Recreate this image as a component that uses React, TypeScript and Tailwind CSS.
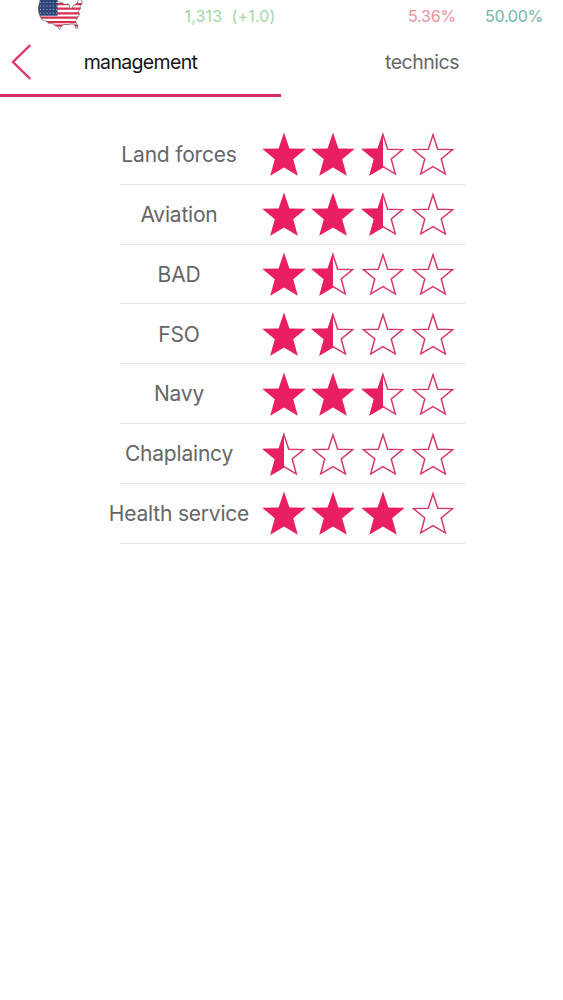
import React from 'react';

const ratings = [
  { label: 'Land forces', stars: 2.5 },
  { label: 'Aviation', stars: 2.5 },
  { label: 'BAD', stars: 1.5 },
  { label: 'FSO', stars: 1.5 },
  { label: 'Navy', stars: 2.5 },
  { label: 'Chaplaincy', stars: 0.5 },
  { label: 'Health service', stars: 3 },
];

function Star({ fill }: { fill: number }) {
  return (
    <svg viewBox="0 0 44 44" className="h-[44px] w-[44px] shrink-0">
      {fill === 1 ? (
        <path d="M22 0.4L27.4 16.6L43.8 16.8L31.2 27.2L35.8 43.7L22 35.6L8.2 43.7L12.8 27.2L0.2 16.8L16.6 16.6Z" fill="#e91e63" />
      ) : (
        <path
          d="M22 2.8L26.7 17.3L41.6 17.6L30.2 27L34.3 41.8L22 34.6L9.7 41.8L13.8 27L2.4 17.6L17.3 17.3Z"
          fill="none"
          stroke="#d63a72"
          strokeWidth="1.5"
        />
      )}
      {fill === 0.5 && <path d="M22 0.4V35.6L8.2 43.7L12.8 27.2L0.2 16.8L16.6 16.6Z" fill="#e91e63" />}
    </svg>
  );
}

const USA =
  'M2.5 -2L3 1L1.5 7L1.5 11L3 16L5 20L9 21L12 23.5L15 23L18 25.5L20.5 26.5L22.5 29.5L24 26.5L27 24.5L31 24.5L34 24L37 24L39 28.5L41 28L40.5 25L38.5 21.5L40.5 18L42.5 14L41.5 11.5L43.5 8.5L43 6L45.5 3L44 0L44 -2L41.5 -2L40.5 3L36.5 5.5L35 8L32 9L33 5.5L31 4L28 4.5L25 3L22 2L20 0V-2Z';

// Country outline filled with its flag
function FlagMap() {
  return (
    <svg viewBox="0 0 47 31" className="h-[31px] w-[47px]">
      <defs>
        <clipPath id="usa">
          <path d={USA} />
        </clipPath>
      </defs>
      <g clipPath="url(#usa)">
        <path fill="#fff" d="M0 0H47V31H0Z" />
        <path fill="#d8304f" d="M0 3H47V5.2H0ZM0 7.6H47V9.8H0ZM0 12.2H47V14.4H0ZM0 16.6H47V18.8H0ZM0 21H47V23.2H0ZM0 24.5H47V26.8H0Z" />
        <path fill="#2f4778" d="M0 0H20.5V15.8H0Z" />
        {[2.5, 6, 9.5, 13].map((y) => (
          <path key={y} d={`M3 ${y}H20`} stroke="#a9b8d4" strokeWidth="1" strokeDasharray="1 2.2" />
        ))}
      </g>
      <path d={USA} fill="none" stroke="#5b4450" strokeOpacity="0.75" strokeWidth="0.8" />
    </svg>
  );
}

export default function App() {
  return (
    <div className="flex h-[1000px] w-[563px] flex-col overflow-hidden bg-[#fefefe] font-['Inter',sans-serif]">
      <header className="flex h-[32px] pl-[37px] text-[16px] leading-[32px]">
        <FlagMap />
        <span className="ml-[100.5px] w-[223.5px] whitespace-pre tracking-[0.15px] text-[#a4d6a7]">1,313  (+1.0)</span>
        <span className="w-[77px] tracking-[-0.2px] text-[#e9929c]">5.36%</span>
        <span className="tracking-[-0.25px] text-[#72b5a8]">50.00%</span>
      </header>

      <nav className="flex h-[65px] items-stretch text-[19.5px]">
        <div className="relative flex w-[281px] items-center justify-center border-b-[3px] border-[#d92d68] tracking-[-0.65px] text-[#151515]">
          <svg viewBox="0 0 20 36" className="absolute left-[11px] top-[12px] h-[36px] w-[20px]" fill="none" stroke="#e0396f" strokeWidth="2.4">
            <path d="M19.2 1L2 18L19.2 35" />
          </svg>
          management
        </div>
        <div className="flex flex-1 items-center justify-center border-b-[3px] border-transparent tracking-[-0.5px] text-[#666]">technics</div>
      </nav>

      <main className="mt-[28px] ml-[120px] w-[345px]">
        {ratings.map((row) => (
          <div key={row.label} className="flex h-[59.83px] items-center border-b border-[#e6e6ea]">
            <div className="flex w-[118px] justify-center pt-[1px] text-[21px] tracking-[-0.2px] whitespace-nowrap text-[#666]">{row.label}</div>
            <div className="ml-[23.5px] flex gap-[5.7px]">
              {[0, 1, 2, 3].map((i) => (
                <Star key={i} fill={Math.max(0, Math.min(1, row.stars - i))} />
              ))}
            </div>
          </div>
        ))}
      </main>
    </div>
  );
}
